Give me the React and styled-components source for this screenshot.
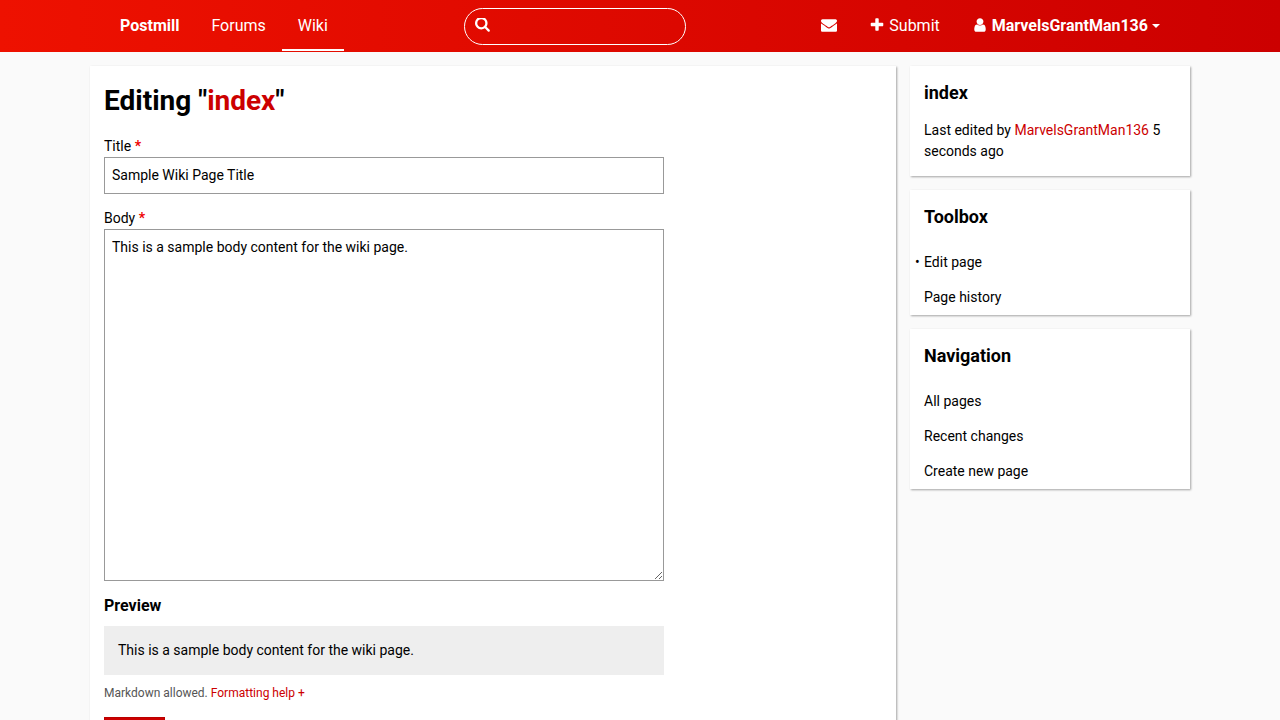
import React from "react";
import styled, { createGlobalStyle, css } from "styled-components";

const GlobalStyle = createGlobalStyle`
  *, *::before, *::after { box-sizing: border-box; }
  body {
    margin: 0;
    background: #fafafa;
    color: #000;
    font: 14px/21px Roboto, "Liberation Sans", sans-serif;
  }
  h1, h2, h3, p, ul { margin: 0; padding: 0; }
`;

const Header = styled.header`
  background: linear-gradient(to right, #e10, #c00);
`;

const HeaderInner = styled.div`
  display: flex;
  align-items: center;
  max-width: 1100px;
  margin: 0 auto;
  padding: 0 14px 1px;
`;

const Glyph = styled.svg`
  flex: none;
  width: 16px;
  height: 16px;
  fill: currentColor;
`;

const NavGroup = styled.nav`
  display: flex;
`;

const NavLink = styled.a`
  display: flex;
  align-items: center;
  gap: 4px;
  height: 51px;
  padding: 2px 16px 0;
  border-bottom: 2px solid ${(p) => (p.$active ? "#fff" : "transparent")};
  color: #fff;
  font-size: 16px;
  font-weight: ${(p) => (p.$strong ? 700 : 400)};
  text-decoration: none;

  ${Glyph} {
    margin-bottom: 2px;
  }
`;

const SearchForm = styled.form`
  display: flex;
  align-items: center;
  flex: 0 1 222px;
  min-width: 0;
  height: 37px;
  margin: 1px auto 0;
  padding: 0 10px;
  border: 1px solid #fff;
  border-radius: 19px;
  color: #fff;
`;

const SearchInput = styled.input`
  flex: 1;
  min-width: 0;
  padding: 0 8px;
  border: 0;
  outline: 0;
  background: transparent;
  color: inherit;
  font: inherit;
`;

const Caret = styled.span`
  border: 4px solid transparent;
  border-top-color: currentColor;
  border-bottom: 0;
`;

const Page = styled.div`
  display: flex;
  align-items: flex-start;
  gap: 14px;
  max-width: 1100px;
  margin: 0 auto;
  padding: 14px 0;
`;

const panel = css`
  background: #fff;
  box-shadow: 1px 1px 2px rgba(0, 0, 0, 0.35);
`;

const Main = styled.main`
  ${panel}
  flex: 1;
  min-width: 0;
  padding: 14px;
`;

const Sidebar = styled.aside`
  display: flex;
  flex-direction: column;
  flex: 0 0 280px;
  gap: 14px;
`;

const Card = styled.section`
  ${panel}
  padding: 14px 14px ${(p) => (p.$menu ? 0 : 14)}px;
`;

const CardTitle = styled.h2`
  font-size: 18px;
  line-height: 26px;
`;

const CardText = styled.p`
  && {
    margin-top: 14px;
  }
`;

const Menu = styled.ul`
  && {
    margin-top: 15px;
  }
  list-style: none;
`;

const MenuLink = styled.a`
  position: relative;
  display: block;
  padding: 7px 0;
  color: #000;
  text-decoration: none;

  ${(p) =>
    p.$current &&
    css`
      &::before {
        content: "•";
        position: absolute;
        left: -9px;
      }
    `}
`;

const Link = styled.a`
  color: #c00;
  text-decoration: none;
`;

const PageTitle = styled.h1`
  margin-bottom: 14px;
  font-size: 28px;
  line-height: 42px;
`;

const Form = styled.form`
  max-width: 560px;
`;

const Field = styled.div`
  margin-bottom: 14px;
`;

const Label = styled.label`
  display: block;
`;

const Required = styled.b`
  color: #e00;
`;

const control = css`
  display: block;
  width: 100%;
  padding: 7px;
  border: 1px solid #999;
  border-radius: 0;
  background: #fff;
  color: #000;
  font: inherit;
`;

const TextInput = styled.input`
  ${control}
  height: 37px;
  padding: 6px 7px 8px;
`;

const TextArea = styled.textarea`
  ${control}
  height: 352px;
  resize: vertical;
`;

const PreviewTitle = styled.h3`
  padding-bottom: 10px;
  font-size: 16px;
  line-height: 21px;
`;

const Preview = styled.div`
  margin-bottom: 8px;
  padding: 14px;
  background: #eee;
`;

const Help = styled.p`
  color: #555;
  font-size: 12px;
  line-height: 20px;
`;

const SaveButton = styled.button`
  margin-top: 14px;
  padding: 7px 14px;
  border: 1px solid #b00;
  background: #c00;
  color: #fff;
  font: inherit;
  font-weight: 700;
`;

const icons = {
  search:
    "M1152 832q0-185-131.5-316.5t-316.5-131.5-316.5 131.5-131.5 316.5 131.5 316.5 316.5 131.5 316.5-131.5 131.5-316.5zm512 832q0 52-38 90t-90 38q-54 0-90-38l-343-342q-179 124-399 124-143 0-273.5-55.5t-225-150-150-225-55.5-273.5 55.5-273.5 150-225 225-150 273.5-55.5 273.5 55.5 225 150 150 225 55.5 273.5q0 220-124 399l343 343q37 37 37 90z",
  plus:
    "M1600 736v192q0 40-28 68t-68 28h-416v416q0 40-28 68t-68 28h-192q-40 0-68-28t-28-68v-416h-416q-40 0-68-28t-28-68v-192q0-40 28-68t68-28h416v-416q0-40 28-68t68-28h192q40 0 68 28t28 68v416h416q40 0 68 28t28 68z",
  user:
    "M1536 1399q0 109-62.5 187t-150.5 78h-854q-88 0-150.5-78t-62.5-187q0-85 8.5-160.5t31.5-152 58.5-131 94-89 134.5-34.5q131 128 313 128t313-128q76 0 134.5 34.5t94 89 58.5 131 31.5 152 8.5 160.5zm-256-887q0 159-112.5 271.5t-271.5 112.5-271.5-112.5-112.5-271.5 112.5-271.5 271.5-112.5 271.5 112.5 112.5 271.5z",
  mail:
    "M1792 710v794q0 66-47 113t-113 47h-1472q-66 0-113-47t-47-113v-794q44 49 101 87 362 246 497 345 57 42 92.5 65.5t94.5 48 110 24.5h2q51 0 110-24.5t94.5-48 92.5-65.5q170-123 498-345 57-39 100-87zm0-294q0 79-49 151t-122 123q-376 261-468 325-10 7-42.5 31t-54 38.5-52 32.5-57.5 27-50 9h-2q-23 0-50-9t-57.5-27-52-32.5-54-38.5-42.5-31q-91-64-262-182.5t-205-142.5q-62-42-117-115.5t-55-136.5q0-78 41.5-130t118.5-52h1472q65 0 112.5 47t47.5 113z",
};

function Icon({ name, viewBox = "0 0 1792 1792" }) {
  return (
    <Glyph viewBox={viewBox} aria-hidden="true">
      <path d={icons[name]} />
    </Glyph>
  );
}

function MenuCard({ title, items, current }) {
  return (
    <Card $menu>
      <CardTitle>{title}</CardTitle>
      <Menu>
        {items.map((item) => (
          <li key={item}>
            <MenuLink href="#" $current={item === current}>
              {item}
            </MenuLink>
          </li>
        ))}
      </Menu>
    </Card>
  );
}

export default function App() {
  return (
    <>
      <GlobalStyle />
      <Header>
        <HeaderInner>
          <NavGroup>
            <NavLink href="#" $strong>Postmill</NavLink>
            <NavLink href="#">Forums</NavLink>
            <NavLink href="#" $active>Wiki</NavLink>
          </NavGroup>
          <SearchForm role="search">
            <Icon name="search" viewBox="0 256 1792 1792" />
            <SearchInput type="search" aria-label="Search" />
          </SearchForm>
          <NavGroup>
            <NavLink href="#" aria-label="Messages">
              <Icon name="mail" />
            </NavLink>
            <NavLink href="#">
              <Icon name="plus" />
              Submit
            </NavLink>
            <NavLink href="#" $strong>
              <Icon name="user" />
              MarvelsGrantMan136
              <Caret />
            </NavLink>
          </NavGroup>
        </HeaderInner>
      </Header>
      <Page>
        <Main>
          <PageTitle>
            Editing "<Link href="#">index</Link>"
          </PageTitle>
          <Form>
            <Field>
              <Label htmlFor="title">
                Title <Required>*</Required>
              </Label>
              <TextInput id="title" defaultValue="Sample Wiki Page Title" />
            </Field>
            <Field>
              <Label htmlFor="body">
                Body <Required>*</Required>
              </Label>
              <TextArea
                id="body"
                defaultValue="This is a sample body content for the wiki page."
              />
            </Field>
            <PreviewTitle>Preview</PreviewTitle>
            <Preview>This is a sample body content for the wiki page.</Preview>
            <Help>
              Markdown allowed. <Link href="#">Formatting help +</Link>
            </Help>
            <SaveButton type="button">Save</SaveButton>
          </Form>
        </Main>
        <Sidebar>
          <Card>
            <CardTitle>index</CardTitle>
            <CardText>
              Last edited by <Link href="#">MarvelsGrantMan136</Link> 5 seconds ago
            </CardText>
          </Card>
          <MenuCard
            title="Toolbox"
            items={["Edit page", "Page history"]}
            current="Edit page"
          />
          <MenuCard
            title="Navigation"
            items={["All pages", "Recent changes", "Create new page"]}
          />
        </Sidebar>
      </Page>
    </>
  );
}
